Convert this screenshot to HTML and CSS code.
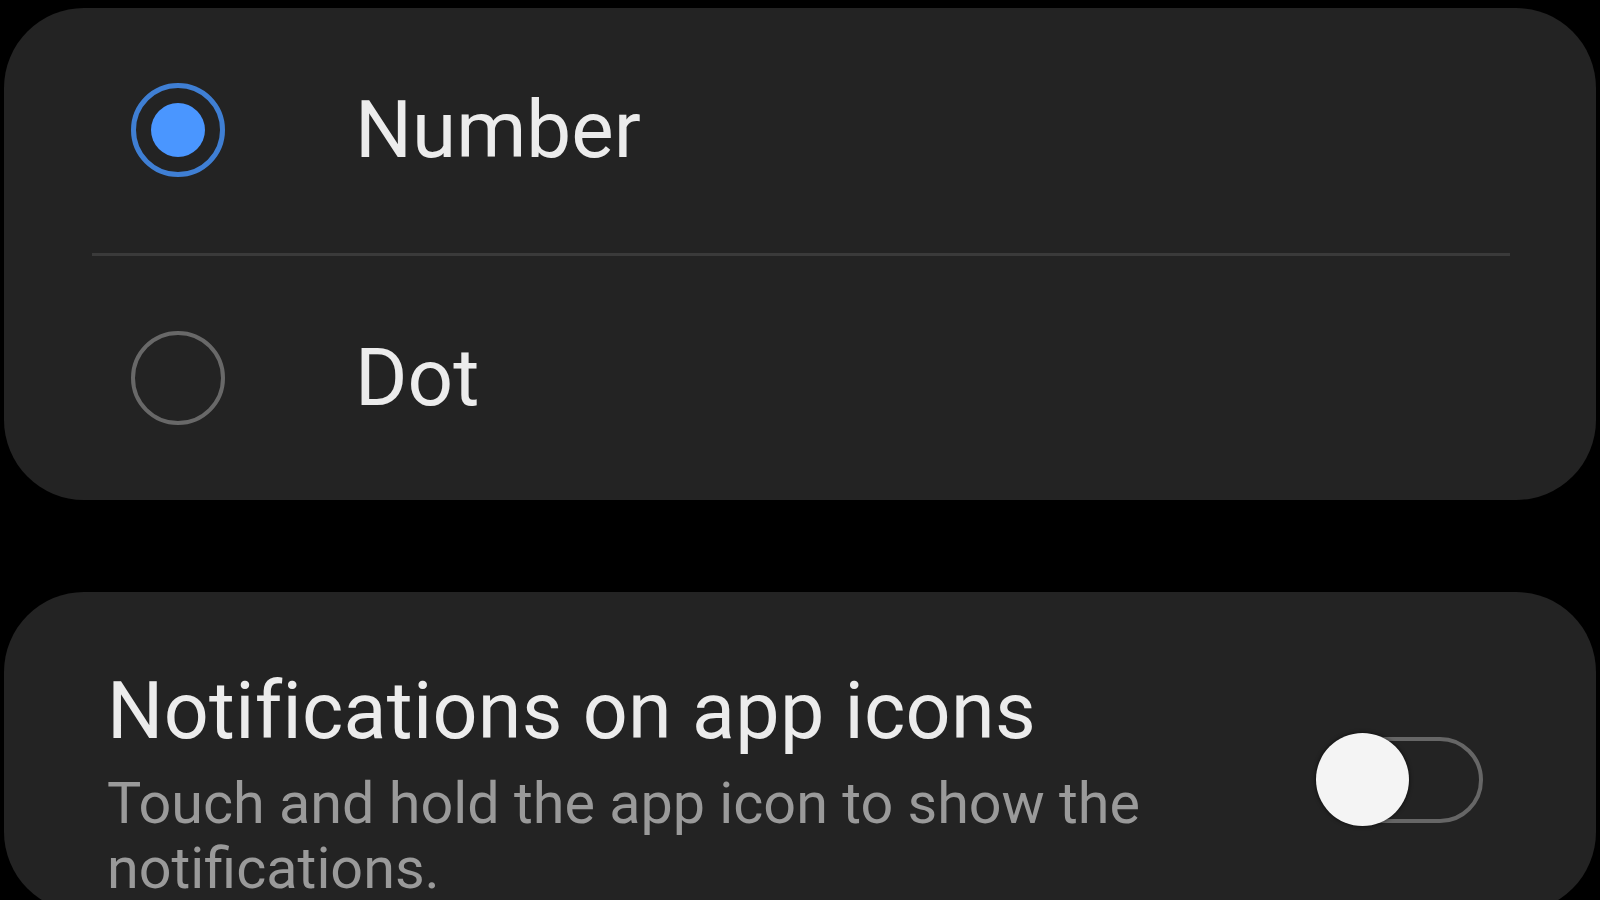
FILE: index.html
```html
<!DOCTYPE html>
<html>
<head>
  <meta charset="utf-8">
  <title>Badge style</title>
  <link rel="stylesheet" href="styles.css">
</head>
<body>
  <div class="card options">
    <div class="option">
      <span class="radio on"><span class="dot"></span></span>
      <span class="label">Number</span>
    </div>
    <div class="divider"></div>
    <div class="option">
      <span class="radio"></span>
      <span class="label">Dot</span>
    </div>
  </div>

  <div class="card setting">
    <div class="setting-text">
      <div class="setting-title">Notifications on app icons</div>
      <div class="setting-sub">Touch and hold the app icon to show the notifications.</div>
    </div>
    <div class="switch">
      <span class="track"></span>
      <span class="knob"></span>
    </div>
  </div>
</body>
</html>
```

FILE: styles.css
```css
* {
  box-sizing: border-box;
}

html, body {
  margin: 0;
  padding: 0;
  background: #000;
  height: 900px;
  overflow: hidden;
  font-family: Roboto, "Noto Sans", sans-serif;
}

body {
  padding: 8px 4px 0;
}

.card {
  background: #232323;
  border-radius: 80px;
}

.options {
  height: 492px;
  display: flex;
  flex-direction: column;
}

.option {
  flex: 1;
  display: flex;
  align-items: center;
  padding-left: 127px;
}

.radio {
  width: 94px;
  height: 94px;
  border-radius: 50%;
  border: 4px solid #686868;
  display: flex;
  align-items: center;
  justify-content: center;
  flex-shrink: 0;
}

.radio.on {
  border: 5px solid #3f7fd4;
}

.dot {
  width: 54px;
  height: 54px;
  border-radius: 50%;
  background: #4a96ff;
}

.label {
  margin-left: 130px;
  font-size: 80px;
  color: #ececec;
}

.divider {
  height: 3px;
  margin: 0 86px 0 88px;
  background: #3a3a3a;
}

.setting {
  margin-top: 92px;
  height: 320px;
  display: flex;
  align-items: flex-start;
  padding: 75px 113px 0 103px;
}

.setting-text {
  flex: 1;
}

.setting-title {
  font-size: 79px;
  line-height: 88px;
  color: #ececec;
  letter-spacing: 0.3px;
}

.setting-sub {
  margin-top: 16px;
  font-size: 57.5px;
  line-height: 65px;
  color: #9a9a9a;
  max-width: 1090px;
}

.switch {
  position: relative;
  width: 167px;
  height: 93px;
  margin-top: 66px;
  flex-shrink: 0;
}

.track {
  position: absolute;
  left: 10px;
  top: 4px;
  width: 157px;
  height: 86px;
  border: 4px solid #666;
  border-radius: 43px;
}

.knob {
  position: absolute;
  left: 0;
  top: 0;
  width: 93px;
  height: 93px;
  border-radius: 50%;
  background: #f4f4f4;
  box-shadow: 0 0 4px rgba(0, 0, 0, 0.7);
}
```
